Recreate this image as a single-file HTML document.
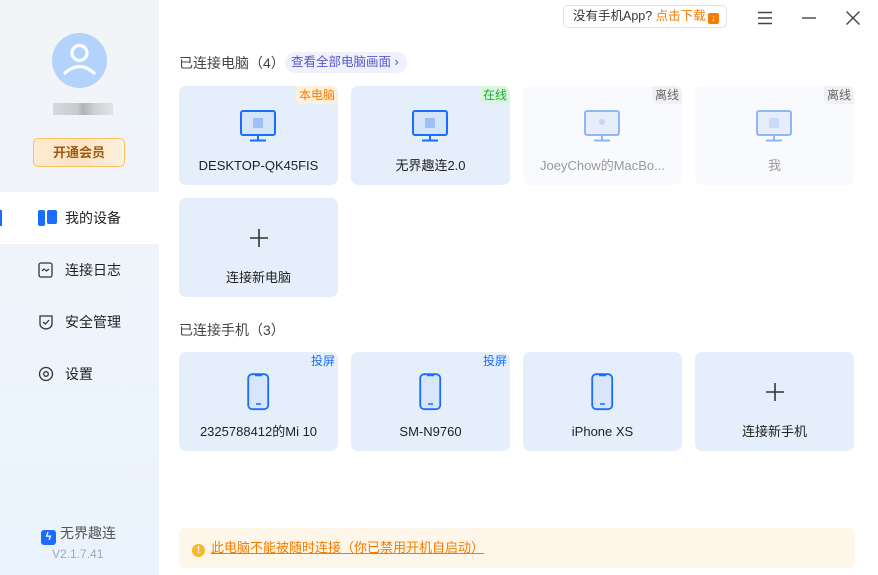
<!DOCTYPE html>
<html><head><meta charset="utf-8"><style>
*{margin:0;padding:0;box-sizing:border-box}
body{width:878px;height:575px;overflow:hidden;background:#fff;font-family:"Liberation Sans","Noto Sans CJK SC",sans-serif;position:relative;color:#222}
.side{position:absolute;left:0;top:0;width:159px;height:575px;background:linear-gradient(#f2f5f8,#eaf3fd)}
.av{position:absolute;left:52px;top:33px;width:55px;height:55px;border-radius:50%;background:#b3d3fd}
.blur{position:absolute;left:53px;top:103px;width:60px;height:12px;background:linear-gradient(90deg,#d6d9dc,#c9cccf 40%,#b0b3b6 50%,#cfd2d5 70%,#e0e3e6)}
.vip{position:absolute;left:33px;top:138px;width:92px;height:29px;border:1px solid #f6c35c;border-radius:5px;background:linear-gradient(90deg,#fdebd2,#fbe3c2,#fdf1e0);color:#a25a0d;font-size:13px;font-weight:bold;text-align:center;line-height:27px}
.nav{position:absolute;left:0;width:159px;height:52px;font-size:14px;line-height:52px;padding-left:65px;color:#222}
.nav svg{position:absolute;left:38px;top:18px}
.act{background:#fff}
.act:before{content:"";position:absolute;left:0;top:18px;width:2px;height:16px;background:#1a6dff}
.h{position:absolute;font-size:14px;color:#444;line-height:18px}
.card{position:absolute;width:159px;height:99px;border-radius:7px;background:#e5effc}
.card.off{background:#f8fafd}
.card .n{position:absolute;left:0;right:0;top:71px;height:18px;line-height:18px;text-align:center;font-size:13px;color:#222;white-space:nowrap}
.card.off .n{color:#999}
.tag{position:absolute;right:0;top:0;font-size:12px;padding:0 3px;line-height:18px;border-radius:0 7px 0 6px}
.card svg{position:absolute}
</style></head><body>
<div class="side">
<div class="av"><svg width="55" height="55" viewBox="0 0 55 55"><circle cx="27.5" cy="20" r="7.5" fill="none" stroke="#fff" stroke-width="3.2"/><path d="M13 40 Q27.5 27 42 40" fill="none" stroke="#fff" stroke-width="3.2" stroke-linecap="round"/></svg></div>
<div class="blur"></div>
<div class="vip">开通会员</div>
<div class="nav act" style="top:192px"><svg width="20" height="16"><rect x="0" y="0" width="7" height="16" rx="2" fill="#1a6dff"/><rect x="9" y="0" width="10" height="14" rx="2" fill="#1a6dff"/></svg>我的设备</div>
<div class="nav" style="top:244px"><svg width="16" height="16"><rect x="1" y="1" width="13" height="14" rx="2" fill="none" stroke="#333" stroke-width="1.3"/><path d="M4 9 L6 7 L8.5 9 L11 7" fill="none" stroke="#333" stroke-width="1.2"/></svg>连接日志</div>
<div class="nav" style="top:296px"><svg width="16" height="16"><path d="M2 2 L14 2 L14 10 Q14 14 8 15 Q2 14 2 10Z" fill="none" stroke="#333" stroke-width="1.3"/><path d="M5 8 L7.5 10 L11 6" fill="none" stroke="#333" stroke-width="1.3"/></svg>安全管理</div>
<div class="nav" style="top:348px"><svg width="16" height="16"><circle cx="8" cy="8" r="6.5" fill="none" stroke="#333" stroke-width="1.3"/><circle cx="8" cy="8" r="2.3" fill="none" stroke="#333" stroke-width="1.3"/></svg>设置</div>
<div style="position:absolute;left:41px;top:523px;font-size:14px;color:#555"><span style="display:inline-block;width:15px;height:15px;border-radius:3px;background:#1a6dff;vertical-align:-2px;margin-right:4px;color:#fff;font-size:11px;text-align:center;line-height:15px;font-weight:bold">ϟ</span>无界趣连</div>
<div style="position:absolute;left:52px;top:547px;font-size:12px;color:#a0a8b4">V2.1.7.41</div>
</div>

<div style="position:absolute;left:563px;top:5px;width:164px;height:23px;border:1px solid #e2e2e2;border-radius:5px;font-size:12.5px;line-height:21px;padding-left:9px;color:#333">没有手机App? <span style="color:#f57c00">点击下载</span><span style="display:inline-block;width:11px;height:11px;background:#f57c00;border-radius:2px;vertical-align:-1px;margin-left:2px;color:#fff;font-size:9px;line-height:11px;text-align:center;font-weight:bold">↓</span></div>
<svg style="position:absolute;left:757px;top:11px" width="16" height="14"><path d="M1 1.5H15M1 7H15M1 12.5H15" stroke="#444" stroke-width="1.4"/></svg>
<svg style="position:absolute;left:801px;top:11px" width="16" height="14"><path d="M1 7H15" stroke="#444" stroke-width="1.4"/></svg>
<svg style="position:absolute;left:845px;top:10px" width="16" height="16"><path d="M1.5 1.5L14.5 14.5M14.5 1.5L1.5 14.5" stroke="#444" stroke-width="1.4"/></svg>

<div class="h" style="left:179px;top:54px">已连接电脑（4）</div>
<div style="position:absolute;left:285px;top:52px;height:21px;padding:0 8px 0 6px;border-radius:10px;background:#f1f1fd;color:#5558c8;font-size:12.5px;line-height:21px">查看全部电脑画面 ›</div>

<div class="card" style="left:179px;top:86px"><div class="tag" style="background:#fff0dc;color:#f57c00">本电脑</div><svg style="left:61px;top:24px" width="38" height="32"><rect x="1" y="1" width="34" height="24" rx="2" fill="#d4e4fb" stroke="#1a6dff" stroke-width="2"/><rect x="13" y="8" width="10" height="10" fill="#9fc0f5"/><path d="M18 26V30M10 30.5H26" stroke="#1a6dff" stroke-width="2"/></svg><div class="n">DESKTOP-QK45FIS</div></div>
<div class="card" style="left:351px;top:86px"><div class="tag" style="background:#d9f7df;color:#1fa832">在线</div><svg style="left:61px;top:24px" width="38" height="32"><rect x="1" y="1" width="34" height="24" rx="2" fill="#d4e4fb" stroke="#1a6dff" stroke-width="2"/><rect x="13" y="8" width="10" height="10" fill="#9fc0f5"/><path d="M18 26V30M10 30.5H26" stroke="#1a6dff" stroke-width="2"/></svg><div class="n">无界趣连2.0</div></div>
<div class="card off" style="left:523px;top:86px"><div class="tag" style="background:#f0f1f3;color:#666">离线</div><svg style="left:61px;top:24px" width="38" height="32"><rect x="1" y="1" width="34" height="24" rx="2" fill="#e6eefb" stroke="#8db8f7" stroke-width="2"/><circle cx="18" cy="12" r="3" fill="#c0d6f8"/><path d="M18 26V30M10 30.5H26" stroke="#8db8f7" stroke-width="2"/></svg><div class="n">JoeyChow的MacBo...</div></div>
<div class="card off" style="left:695px;top:86px"><div class="tag" style="background:#f0f1f3;color:#666">离线</div><svg style="left:61px;top:24px" width="38" height="32"><rect x="1" y="1" width="34" height="24" rx="2" fill="#e6eefb" stroke="#8db8f7" stroke-width="2"/><rect x="13" y="8" width="10" height="10" fill="#c8dcfa"/><path d="M18 26V30M10 30.5H26" stroke="#8db8f7" stroke-width="2"/></svg><div class="n">我</div></div>
<div class="card" style="left:179px;top:198px"><svg style="left:70px;top:30px" width="20" height="20"><path d="M10 1V19M1 10H19" stroke="#333" stroke-width="1.6"/></svg><div class="n">连接新电脑</div></div>

<div class="h" style="left:179px;top:321px">已连接手机（3）</div>
<div class="card" style="left:179px;top:352px"><div class="tag" style="color:#1a6dff">投屏</div><svg style="left:68px;top:21px" width="24" height="38"><rect x="1.2" y="1.2" width="20" height="35" rx="4" fill="#d7e6fc" stroke="#1a6dff" stroke-width="1.8"/><path d="M8 2.5H15M9 31H14" stroke="#1a6dff" stroke-width="1.4"/></svg><div class="n">2325788412的Mi 10</div></div>
<div class="card" style="left:351px;top:352px"><div class="tag" style="color:#1a6dff">投屏</div><svg style="left:68px;top:21px" width="24" height="38"><rect x="1.2" y="1.2" width="20" height="35" rx="4" fill="#d7e6fc" stroke="#1a6dff" stroke-width="1.8"/><path d="M8 2.5H15M9 31H14" stroke="#1a6dff" stroke-width="1.4"/></svg><div class="n">SM-N9760</div></div>
<div class="card" style="left:523px;top:352px"><svg style="left:68px;top:21px" width="24" height="38"><rect x="1.2" y="1.2" width="20" height="35" rx="4" fill="#d7e6fc" stroke="#1a6dff" stroke-width="1.8"/><path d="M8 2.5H15M9 31H14" stroke="#1a6dff" stroke-width="1.4"/></svg><div class="n">iPhone XS</div></div>
<div class="card" style="left:695px;top:352px"><svg style="left:70px;top:30px" width="20" height="20"><path d="M10 1V19M1 10H19" stroke="#333" stroke-width="1.6"/></svg><div class="n">连接新手机</div></div>

<div style="position:absolute;left:179px;top:528px;width:676px;height:40px;border-radius:7px;background:#fef6e8;font-size:13px;line-height:40px;padding-left:13px;color:#f57c00"><span style="display:inline-block;width:13px;height:13px;border-radius:50%;background:#f5b82e;color:#fff;font-size:10px;font-weight:bold;text-align:center;line-height:13px;vertical-align:-1px;margin-right:6px">!</span><span style="text-decoration:underline">此电脑不能被随时连接（你已禁用开机自启动）</span></div>
</body></html>
